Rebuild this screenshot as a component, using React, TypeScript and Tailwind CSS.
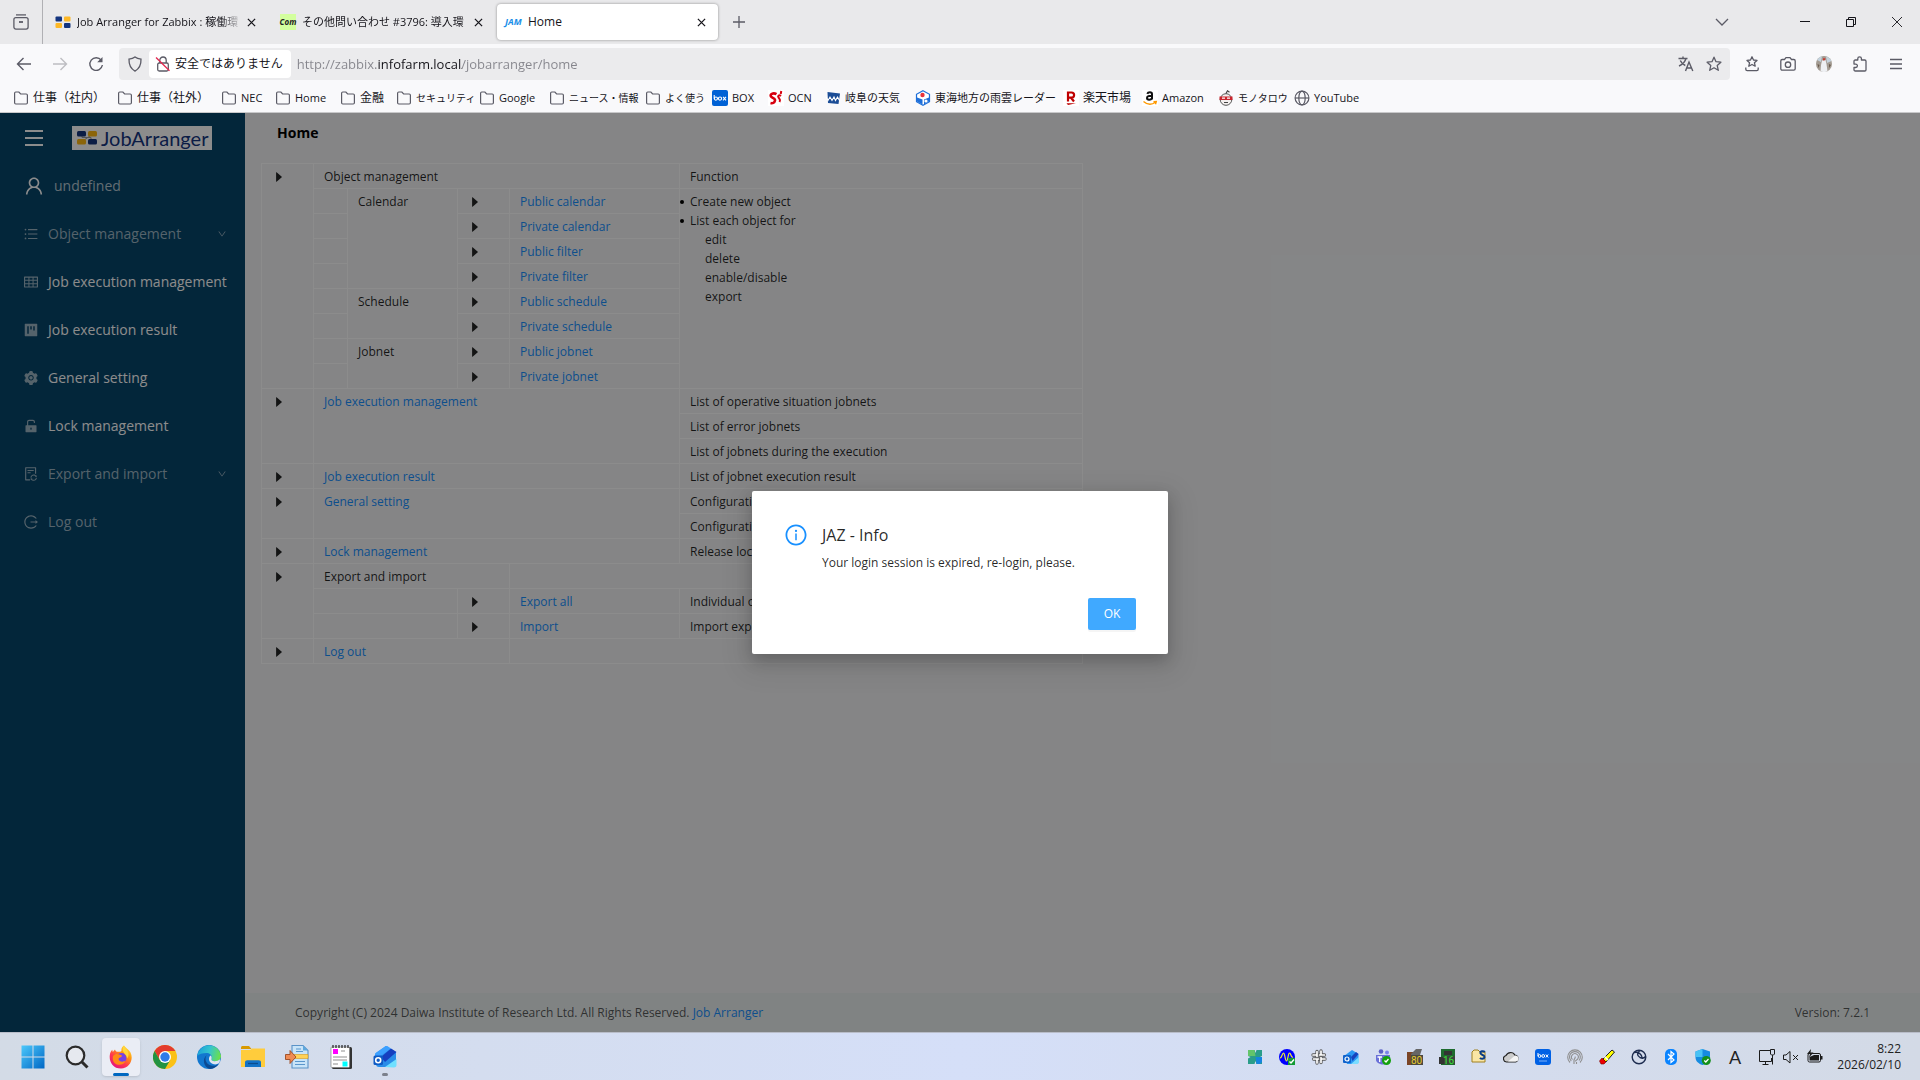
import React, { useState } from 'react';
import {
  AiFillCaretRight,
  AiFillProject,
  AiFillSetting,
  AiFillUnlock,
  AiOutlineDown,
  AiOutlineFileSync,
  AiOutlineInfoCircle,
  AiOutlineLogout,
  AiOutlineTable,
  AiOutlineUnorderedList,
  AiOutlineUser,
} from 'react-icons/ai';

const IconFolder = () => (
  <svg viewBox="0 0 16 16" className="h-4 w-4 shrink-0" fill="none" stroke="#5b5b66" strokeWidth="1.2">
    <path d="M1.6 3.2c0-.7.5-1.2 1.2-1.2h3.1l1.7 2h5.6c.7 0 1.2.5 1.2 1.2v7.6c0 .7-.5 1.2-1.2 1.2H2.8c-.7 0-1.2-.5-1.2-1.2z" />
  </svg>
);

const IconBox = () => (
  <svg viewBox="0 0 16 16" className="h-4 w-4 shrink-0">
    <rect width="16" height="16" rx="2" fill="#0061d5" />
    <g fill="none" stroke="#fff" strokeWidth="1.1">
      <path d="M2.2 5v3.500" />
      <circle cx="3.900" cy="8.600" r="1.600" />
      <circle cx="8" cy="8.600" r="1.600" />
      <path d="m11 6.900 3 3.400m0-3.400-3 3.400" />
    </g>
  </svg>
);

const IconOcn = () => (
  <svg viewBox="0 0 16 16" className="h-4 w-4 shrink-0">
    <rect width="16" height="16" fill="#fff" />
    <g fill="none" stroke="#d7000f" strokeWidth="2.6">
      <path d="M8.5 4.2C5 2.200 1.500 4.500 3 6.500s4.500 1.500 4 4-2.500 3-4.500 2.500" />
      <path d="M13 6c-2-1.500-3.500 0-2.500 1.500s2.500 2 1 4.500" strokeWidth="2" />
      <path d="m13.300 1-.6 3" strokeWidth="2" />
    </g>
  </svg>
);

const IconWeather = () => (
  <svg viewBox="0 0 16 16" className="h-4 w-4 shrink-0">
    <path d="M2.500 2 15 3.500 13.500 14 3 13z" fill="#1b4d96" />
    <path d="m1 7 2 3.500 2-3.500 2 3.500L9 7l1.500 3.500 2-3.500 2 3.500" fill="none" stroke="#fff" strokeWidth="1.100" />
  </svg>
);

const IconRadar = () => (
  <svg viewBox="0 0 16 16" className="h-4 w-4 shrink-0">
    <path d="M8 .8 14.500 4.300v7.400L8 15.200 1.500 11.700V4.300z" fill="#fff" stroke="#1e6fd9" strokeWidth="1.200" />
    <path d="M2 7.500 7.500 9.500v5L2 11.500zM14 7.500 9 9.500v5l5-3z" fill="#1e6fd9" />
    <circle cx="7.500" cy="5" r="2.200" fill="#e8333a" />
    <circle cx="11" cy="11" r="1.600" fill="#fff" />
  </svg>
);

const IconRakuten = () => (
  <svg viewBox="0 0 16 16" className="h-4 w-4 shrink-0">
    <rect width="16" height="16" fill="#fff" />
    <path d="M5 11.500v-9h3.500a2.600 2.600 0 0 1 0 5.200H5m3 0 3 3.800" fill="none" stroke="#bf0000" strokeWidth="2.200" />
    <path d="M3.500 13.200h9.500l-8 1.800z" fill="#bf0000" />
  </svg>
);

const IconAmazon = () => (
  <svg viewBox="0 0 16 16" className="h-4 w-4 shrink-0">
    <rect width="16" height="16" fill="#fff" />
    <path d="M5.300 3.800C6 1.800 10 1.600 10 4v5.400M10 5.800c-3-.2-5 .5-5 2.200 0 2.400 4 2.200 5 .2" fill="none" stroke="#111" strokeWidth="2" />
    <path d="M1.500 11.500c4 3.500 8.500 3.300 12 .8M11.500 11.800l2.800-.3-.8 2.700" fill="none" stroke="#f90" strokeWidth="1.400" />
  </svg>
);

const IconMonotaro = () => (
  <svg viewBox="0 0 16 16" className="h-4 w-4 shrink-0">
    <circle cx="8" cy="9.500" r="5.800" fill="#f4f0ef" stroke="#555" strokeWidth="1" />
    <path d="M1.500 6.500h13v3.500h-13z" fill="#c9242d" />
    <path d="M4 8.200h3M9 8.200h3" stroke="#fff" strokeWidth="1.300" />
    <path d="M6 12.500h4M8 3.500 9.500.8l2 1.400" fill="none" stroke="#444" strokeWidth="1.200" />
  </svg>
);

const IconGlobe = () => (
  <svg viewBox="0 0 16 16" className="h-4 w-4 shrink-0" fill="none" stroke="#5b5b66" strokeWidth="1.200">
    <circle cx="8" cy="8" r="6.900" />
    <ellipse cx="8" cy="8" rx="3.200" ry="6.900" />
    <path d="M1 8h14" />
  </svg>
);

const IconArranger = () => (
  <svg viewBox="0 0 20 15" className="h-4 w-5 shrink-0">
    <path d="M5 3v4h9v4M15 4 5 11" fill="none" stroke="#999" strokeWidth="1" />
    <rect x="0" y="0.500" width="9" height="5.500" rx="1.500" fill="#14357f" />
    <rect x="11" y="0.500" width="9" height="5.500" rx="1.500" fill="#fdb813" />
    <rect x="0" y="8.500" width="9" height="5.500" rx="1.500" fill="#fdb813" />
    <rect x="11" y="8.500" width="9" height="5.500" rx="1.500" fill="#14357f" />
  </svg>
);

const IconTabSquares = () => (
  <svg viewBox="0 0 16 16" className="h-4 w-4 shrink-0">
    <rect x="0.500" y="2.500" width="6.500" height="5" rx="1" fill="#14357f" />
    <rect x="9" y="2.500" width="6.500" height="5" rx="1" fill="#fdb827" />
    <rect x="0.500" y="9" width="6.500" height="5" rx="1" fill="#fdb827" />
    <rect x="9" y="9" width="6.500" height="5" rx="1" fill="#14357f" />
  </svg>
);

const IconClose = () => (
  <svg viewBox="0 0 10 10" className="h-[9px] w-[9px]" stroke="#15141a" strokeWidth="1.400">
    <path d="m1 1 8 8M9 1 1 9" />
  </svg>
);

interface Bookmark {
  label: string;
  icon: React.ReactNode;
  width: string;
  size: string;
}

const bookmarks: Bookmark[] = [
  { label: '仕事（社内）', icon: <IconFolder />, width: 'w-[104px]', size: 'text-xs' },
  { label: '仕事（社外）', icon: <IconFolder />, width: 'w-[104px]', size: 'text-xs' },
  { label: 'NEC', icon: <IconFolder />, width: 'w-[54px]', size: 'text-[11px]' },
  { label: 'Home', icon: <IconFolder />, width: 'w-[65px]', size: 'text-[11px]' },
  { label: '金融', icon: <IconFolder />, width: 'w-[56px]', size: 'text-xs' },
  { label: 'セキュリティ', icon: <IconFolder />, width: 'w-[83px]', size: 'text-[10px]' },
  { label: 'Google', icon: <IconFolder />, width: 'w-[70px]', size: 'text-[11px]' },
  { label: 'ニュース・情報', icon: <IconFolder />, width: 'w-[96px]', size: 'text-[10px]' },
  { label: 'よく使う', icon: <IconFolder />, width: 'w-[67px]', size: 'text-[10px]' },
  { label: 'BOX', icon: <IconBox />, width: 'w-[56px]', size: 'text-[11px]' },
  { label: 'OCN', icon: <IconOcn />, width: 'w-[57px]', size: 'text-[11px]' },
  { label: '岐阜の天気', icon: <IconWeather />, width: 'w-[90px]', size: 'text-[11px]' },
  { label: '東海地方の雨雲レーダー', icon: <IconRadar />, width: 'w-[148px]', size: 'text-[11px]' },
  { label: '楽天市場', icon: <IconRakuten />, width: 'w-[79px]', size: 'text-xs' },
  { label: 'Amazon', icon: <IconAmazon />, width: 'w-[76px]', size: 'text-[11px]' },
  { label: 'モノタロウ', icon: <IconMonotaro />, width: 'w-[76px]', size: 'text-[10px]' },
  { label: 'YouTube', icon: <IconGlobe />, width: 'w-[66px]', size: 'text-[11px]' },
];

const TabBar: React.FC = () => (
  <div className="flex h-11 items-center bg-[#e9e9eb]">
    <button type="button" aria-label="Tab overview" className="flex h-11 w-[42px] items-center justify-center">
      <svg viewBox="0 0 16 16" className="h-4 w-4" fill="none" stroke="#5b5b66" strokeWidth="1.300">
        <path d="M3 .9h10" />
        <rect x="0.900" y="3.600" width="14.200" height="11.500" rx="2" />
        <path d="M6 8h4" strokeWidth="1.800" />
      </svg>
    </button>
    <div className="h-11 w-px bg-[#b0b0b4]" />
    <div className="flex w-[225px] items-center pl-3">
      <IconTabSquares />
      <span className="ml-1.5 flex-1 whitespace-nowrap text-[11px] [mask-image:linear-gradient(to_right,black_86%,transparent)]">
        Job Arranger for Zabbix : 稼働環
      </span>
      <button type="button" aria-label="Close tab" className="mr-3 ml-1"><IconClose /></button>
    </div>
    <div className="flex w-[229px] items-center pl-3">
      <span className="flex h-4 w-4 shrink-0 items-center justify-center bg-[#d3ff9e] text-[8px] font-bold italic text-[#222]">Com</span>
      <span className="ml-1.5 flex-1 whitespace-nowrap text-[11px] [mask-image:linear-gradient(to_right,black_92%,transparent)]">
        その他問い合わせ #3796: 導入環
      </span>
      <button type="button" aria-label="Close tab" className="mr-3.5"><IconClose /></button>
    </div>
    <div className="flex h-9 w-[221px] items-center rounded bg-white pl-2 shadow-[0_0_3px_rgba(0,0,0,0.4)]">
      <span className="w-[17px] text-[9px] font-bold italic text-[#1a8fe8]">JAM</span>
      <span className="ml-1.5 flex-1 text-xs">Home</span>
      <button type="button" aria-label="Close tab" className="mr-3"><IconClose /></button>
    </div>
    <button type="button" aria-label="New tab" className="ml-3.5">
      <svg viewBox="0 0 14 14" className="h-3.5 w-3.5" stroke="#5b5b66" strokeWidth="1.300"><path d="M7 1v12M1 7h12" /></svg>
    </button>
    <div className="flex-1" />
    <button type="button" aria-label="List all tabs" className="mr-[71px]">
      <svg viewBox="0 0 14 14" className="h-3.5 w-3.5" fill="none" stroke="#5b5b66" strokeWidth="1.300"><path d="m1 4 6 6 6-6" /></svg>
    </button>
    <button type="button" aria-label="Minimize" className="mr-9">
      <svg viewBox="0 0 10 10" className="h-2.5 w-2.5" stroke="#15141a"><path d="M0 4.500h10" /></svg>
    </button>
    <button type="button" aria-label="Restore" className="mr-9">
      <svg viewBox="0 0 10 10" className="h-2.5 w-2.5" fill="none" stroke="#15141a"><path d="M.5 2.500h7v7h-7zM2.500 2.500v-2h7v7h-2" /></svg>
    </button>
    <button type="button" aria-label="Close window" className="mr-[18px]">
      <svg viewBox="0 0 10 10" className="h-2.5 w-2.5" stroke="#15141a" strokeWidth="0.900"><path d="m0 0 10 10M10 0 0 10" /></svg>
    </button>
  </div>
);

const starPath = 'm8 1.200 2 4.500 4.900.5-3.700 3.200 1.100 4.900L8 11.800l-4.300 2.500 1.100-4.900L1.100 6.200 6 5.700z';

const ToolBar: React.FC = () => (
  <div className="flex h-10 items-center text-[#5b5b66]">
    <div className="flex w-[119px] items-center gap-5 pl-4">
      <button type="button" aria-label="Back">
        <svg viewBox="0 0 16 16" className="h-4 w-4" fill="none" stroke="currentColor" strokeWidth="1.400"><path d="M15 8H1.500M7.500 2l-6 6 6 6" /></svg>
      </button>
      <button type="button" aria-label="Forward" className="text-[#bdbdc2]">
        <svg viewBox="0 0 16 16" className="h-4 w-4" fill="none" stroke="currentColor" strokeWidth="1.400"><path d="M1 8h13.500M8.500 2l6 6-6 6" /></svg>
      </button>
      <button type="button" aria-label="Reload">
        <svg viewBox="0 0 16 16" className="h-4 w-4" fill="none" stroke="currentColor" strokeWidth="1.400">
          <path d="M13.200 4.200A6.300 6.300 0 1 0 14.400 9" />
          <path d="M14.500 1v5.300H9.200z" fill="currentColor" stroke="none" />
        </svg>
      </button>
    </div>
    <div className="flex h-8 flex-1 items-center rounded bg-[#ebebed] pl-2">
      <svg viewBox="0 0 16 16" className="h-4 w-4" fill="none" stroke="currentColor" strokeWidth="1.300">
        <path d="M8 .9c1.900 1.500 4 2 6 2.200.2 5.500-1.300 9.500-6 12-4.700-2.500-6.200-6.500-6-12 2-.2 4.100-.7 6-2.200z" />
      </svg>
      <button type="button" className="ml-1.5 flex h-7 items-center gap-1 rounded bg-white pr-2 pl-1.5 text-xs whitespace-nowrap text-[#15141a]">
        <svg viewBox="0 0 16 16" className="h-4 w-4" fill="none" stroke="#5b5b66" strokeWidth="1.300">
          <rect x="2.700" y="7" width="10.600" height="8" rx="1.500" />
          <path d="M4.800 7V4.200a3.200 3.200 0 0 1 6.400 0V7" />
          <path d="m1 1.500 13.500 13.300" stroke="#e22850" />
        </svg>
        安全ではありません
      </button>
      <input
        aria-label="Address"
        defaultValue="http://zabbix.infofarm.local/jobarranger/home"
        className="ml-1.5 h-7 flex-1 bg-[linear-gradient(to_right,#85858c_80px,#15141a_80px,#15141a_165px,#85858c_165px)] bg-clip-text text-[13px] text-transparent outline-none"
      />
      <button type="button" aria-label="Translate" className="mr-3">
        <svg viewBox="0 0 16 16" className="h-4 w-4" fill="none" stroke="currentColor" strokeWidth="1.400">
          <path d="M.5 2.500h9M5 .5v2M8 2.500C7 6 4.500 8.500 1 10M2.300 4.500c1 2.500 2.700 4 5 5" />
          <path d="m7.500 15 3.500-9 3.800 9M8.800 12h4.800" />
        </svg>
      </button>
      <button type="button" aria-label="Bookmark this page" className="mr-2">
        <svg viewBox="0 0 16 16" className="h-4 w-4" fill="none" stroke="currentColor" strokeWidth="1.300" strokeLinejoin="round"><path d={starPath} /></svg>
      </button>
    </div>
    <div className="flex items-center gap-5 pr-4 pl-3.5">
      <button type="button" aria-label="Bookmarks">
        <svg viewBox="0 0 16 16" className="h-4 w-4" fill="none" stroke="currentColor" strokeWidth="1.300" strokeLinejoin="round">
          <path d="m8 .8 1.500 3.200 3.500.4-2.600 2.300.8 3.500L8 8.500l-3.200 1.700.8-3.500L3 4.400 6.500 4z" />
          <path d="M1.800 11.500v1.700c0 .8.600 1.400 1.400 1.400h9.600c.8 0 1.400-.6 1.400-1.400v-1.700" />
        </svg>
      </button>
      <button type="button" aria-label="Screenshot">
        <svg viewBox="0 0 16 16" className="h-4 w-4" fill="none" stroke="currentColor" strokeWidth="1.300">
          <path d="M2.200 3.500h2.300L6 1.700h4l1.500 1.800h2.300c.8 0 1.400.6 1.400 1.400v7.900c0 .8-.6 1.400-1.400 1.400H2.200c-.8 0-1.400-.6-1.400-1.400V4.900c0-.8.6-1.400 1.400-1.400z" />
          <circle cx="8" cy="8.700" r="2.700" />
        </svg>
      </button>
      <button type="button" aria-label="Account">
        <svg viewBox="0 0 16 16" className="h-4 w-4">
          <circle cx="8" cy="8" r="8" fill="#a39b92" />
          <path d="M1 4a8 8 0 0 1 5-3.800L5 6zM10 .4A8 8 0 0 1 15.500 5L11 7z" fill="#c3d2dd" />
          <path d="M6 4.500 9.500 4l1 4 1 7.200a8 8 0 0 1-7 0L5 9z" fill="#eef0f3" />
          <path d="M7 2.300h2.500l-.5 2-2 .2z" fill="#c93a30" />
          <path d="m1.500 8 2 1-1 3zM13 8l2 1-2 3z" fill="#6a5a4c" />
        </svg>
      </button>
      <button type="button" aria-label="Extensions">
        <svg viewBox="0 0 16 16" className="h-4 w-4" fill="none" stroke="currentColor" strokeWidth="1.300" strokeLinejoin="round">
          <path d="M2 5.200c0-.7.500-1.200 1.200-1.200h2.600V2.600a1.800 1.800 0 0 1 3.600 0V4h3.400c.7 0 1.200.5 1.200 1.200v8.600c0 .7-.5 1.200-1.200 1.200H3.200c-.7 0-1.200-.5-1.200-1.200v-2.300h1.700a1.700 1.700 0 0 0 0-3.400H2z" />
        </svg>
      </button>
      <button type="button" aria-label="Menu">
        <svg viewBox="0 0 16 16" className="h-4 w-4" stroke="currentColor" strokeWidth="1.300"><path d="M2 3.500h12M2 8h12M2 12.500h12" /></svg>
      </button>
    </div>
  </div>
);

const BookmarkBar: React.FC = () => (
  <nav aria-label="Bookmarks" className="flex h-[29px] items-center border-b border-[#c8c8ca] pl-[13px]">
    {bookmarks.map((item) => (
      <a key={item.label} href="#" className={`flex shrink-0 items-center gap-1 whitespace-nowrap ${item.width} ${item.size}`}>
        {item.icon}
        {item.label}
      </a>
    ))}
  </nav>
);

const menuItems = [
  { label: 'Object management', Icon: AiOutlineUnorderedList, group: true, muted: true },
  { label: 'Job execution management', Icon: AiOutlineTable, group: false, muted: false },
  { label: 'Job execution result', Icon: AiFillProject, group: false, muted: false },
  { label: 'General setting', Icon: AiFillSetting, group: false, muted: false },
  { label: 'Lock management', Icon: AiFillUnlock, group: false, muted: false },
  { label: 'Export and import', Icon: AiOutlineFileSync, group: true, muted: true },
  { label: 'Log out', Icon: AiOutlineLogout, group: false, muted: true },
];

const Sidebar: React.FC = () => (
  <aside className="w-[245px] shrink-0 bg-[#07456a] text-sm">
    <div className="flex h-[49px] items-center pl-[25px]">
      <button type="button" aria-label="Toggle menu" className="flex w-[18px] flex-col gap-[5px]">
        <span className="h-0.5 bg-white" />
        <span className="h-0.5 bg-white" />
        <span className="h-0.5 bg-white" />
      </button>
      <div className="ml-[29px] flex h-6 w-[140px] items-center gap-1 bg-white pl-[5px]">
        <IconArranger />
        <span className="font-['Lato',sans-serif] text-[20px] leading-6 text-[#14357f]">JobArranger</span>
      </div>
    </div>
    <div className="flex h-12 items-center pl-[23px] text-[#b5c7d2]">
      <AiOutlineUser className="h-[22px] w-[22px] text-white" />
      <span className="ml-[9px]">undefined</span>
    </div>
    <nav>
      {menuItems.map(({ label, Icon, group, muted }) => (
        <a key={label} href="#" className={`flex h-12 items-center pl-[23px] whitespace-nowrap ${muted ? 'text-[#9cb5c3]' : 'text-white'}`}>
          <Icon className="h-4 w-4 text-[#9cb5c3]" />
          <span className="ml-[9px] flex-1">{label}</span>
          {group && <AiOutlineDown className="mr-[18px] h-2.5 w-2.5" />}
        </a>
      ))}
    </nav>
  </aside>
);

const cell = 'h-[25px] border border-white px-2.5 pt-[3px] pb-[2px] align-top';

const Arrow = ({ rows = 1 }: { rows?: number }) => (
  <td rowSpan={rows} className={cell}>
    <AiFillCaretRight className="mt-[3px] h-3.5 w-3.5" />
  </td>
);

const LinkCell = ({ label, cols = 1, rows = 1 }: { label: string; cols?: number; rows?: number }) => (
  <td colSpan={cols} rowSpan={rows} className={cell}>
    <a href="#" className="text-[#1890ff]">{label}</a>
  </td>
);

const objectRows = [
  { group: 'Calendar', rows: 4, label: 'Public calendar' },
  { label: 'Private calendar' },
  { label: 'Public filter' },
  { label: 'Private filter' },
  { group: 'Schedule', rows: 2, label: 'Public schedule' },
  { label: 'Private schedule' },
  { group: 'Jobnet', rows: 2, label: 'Public jobnet' },
  { label: 'Private jobnet' },
];

const FunctionTable: React.FC = () => (
  <table className="ml-4 w-[822px] table-fixed border-collapse text-xs leading-[19px] text-black/85">
    <colgroup>
      <col className="w-[52px]" />
      <col className="w-[34px]" />
      <col className="w-[110px]" />
      <col className="w-[52px]" />
      <col className="w-[170px]" />
      <col />
    </colgroup>
    <tbody>
      <tr>
        <Arrow rows={9} />
        <td colSpan={4} className={cell}>Object management</td>
        <td className={cell}>Function</td>
      </tr>
      {objectRows.map((row, index) => (
        <tr key={row.label}>
          <td className={cell} />
          {row.group && <td rowSpan={row.rows} className={cell}>{row.group}</td>}
          <Arrow />
          <LinkCell label={row.label} />
          {index === 0 && (
            <td rowSpan={8} className={cell}>
              <ul>
                {['Create new object', 'List each object for'].map((text) => (
                  <li key={text} className="relative">
                    <span className="absolute top-2 -left-2.5 h-1 w-1 rounded-full bg-black" />
                    {text}
                  </li>
                ))}
              </ul>
              <ul className="pl-[15px]">
                <li>edit</li>
                <li>delete</li>
                <li>enable/disable</li>
                <li>export</li>
              </ul>
            </td>
          )}
        </tr>
      ))}
      <tr>
        <Arrow rows={3} />
        <LinkCell label="Job execution management" cols={4} rows={3} />
        <td className={cell}>List of operative situation jobnets</td>
      </tr>
      <tr><td className={cell}>List of error jobnets</td></tr>
      <tr><td className={cell}>List of jobnets during the execution</td></tr>
      <tr>
        <Arrow />
        <LinkCell label="Job execution result" cols={4} />
        <td className={cell}>List of jobnet execution result</td>
      </tr>
      <tr>
        <Arrow rows={2} />
        <LinkCell label="General setting" cols={4} rows={2} />
        <td className={cell}>Configuration</td>
      </tr>
      <tr><td className={cell}>Configuration</td></tr>
      <tr>
        <Arrow />
        <LinkCell label="Lock management" cols={4} />
        <td className={cell}>Release lock</td>
      </tr>
      <tr>
        <Arrow rows={3} />
        <td colSpan={3} className={cell}>Export and import</td>
        <td colSpan={2} className={cell} />
      </tr>
      <tr>
        <td colSpan={2} className={cell} />
        <Arrow />
        <LinkCell label="Export all" />
        <td className={cell}>Individual o</td>
      </tr>
      <tr>
        <td colSpan={2} className={cell} />
        <Arrow />
        <LinkCell label="Import" />
        <td className={cell}>Import expo</td>
      </tr>
      <tr>
        <Arrow />
        <LinkCell label="Log out" cols={3} />
        <td colSpan={2} className={cell} />
      </tr>
    </tbody>
  </table>
);

const InfoDialog = ({ onClose }: { onClose: () => void }) => (
  <div className="absolute inset-0 flex items-center justify-center bg-black/45">
    <div
      role="dialog"
      aria-labelledby="dialog-title"
      className="w-[416px] rounded-xs bg-white px-8 pt-8 pb-6 shadow-[0_6px_16px_rgba(0,0,0,0.2),0_9px_28px_8px_rgba(0,0,0,0.08)]"
    >
      <div className="flex gap-3.5">
        <AiOutlineInfoCircle className="h-6 w-6 text-[#1890ff]" />
        <div className="text-black/85">
          <h2 id="dialog-title" className="text-base leading-6">JAZ - Info</h2>
          <p className="mt-1.5 text-xs leading-[19px]">Your login session is expired, re-login, please.</p>
        </div>
      </div>
      <div className="mt-[26px] flex justify-end">
        <button type="button" onClick={onClose} className="h-8 w-12 rounded-xs bg-[#40a9ff] text-xs text-white shadow-[0_2px_0_rgba(0,0,0,0.04)]">
          OK
        </button>
      </div>
    </div>
  </div>
);

const launchers = [
  {
    label: 'Start',
    art: (
      <>
        <defs>
          <linearGradient id="win" x1="0" y1="0" x2="1" y2="1"><stop stopColor="#4cc8fb" /><stop offset="1" stopColor="#0067c5" /></linearGradient>
        </defs>
        <path d="M.5.500h11v11H.500zM12.500.500h11v11h-11zM.5 12.500h11v11H.500zM12.500 12.500h11v11h-11z" fill="url(#win)" />
      </>
    ),
  },
  {
    label: 'Search',
    art: (
      <g fill="none" stroke="#2b2b2b">
        <circle cx="10.500" cy="10.500" r="8.800" strokeWidth="2.200" fill="#e6e9ef" />
        <path d="m17 17 5.500 5.500" strokeWidth="3" />
      </g>
    ),
  },
  {
    label: 'Firefox',
    active: true,
    art: (
      <>
        <defs>
          <linearGradient id="fox" x1="1" y1="0" x2="0.300" y2="1"><stop stopColor="#fff44f" /><stop offset=".4" stopColor="#ff980e" /><stop offset=".7" stopColor="#ff3750" /><stop offset="1" stopColor="#e5157a" /></linearGradient>
        </defs>
        <path d="M15 .5c1 2 5 4 6.500 7 3.500 7-1 16-9.500 16S-.5 16 1 9c.3-1.800 1.200-3.200 2.200-4.300L3.800 7 6 4.500c.3 1.300 1 2 2 2.300 2 .2 3.500 0 4.500-.8C12 3.500 13.500 1.500 15 .5z" fill="url(#fox)" />
        <circle cx="12.500" cy="13" r="5" fill="#7542e5" />
        <path d="M4 11c2-2.500 4.500-2.500 6.500-1.500 2 .5 2.500 1 2.500 1.800-1 1.200-3 1-3.500 2.700.5 3 5 3.500 7 1.500-1 5-8 5.500-11 2.500-1.700-2-2-4.500-1.500-7z" fill="#ff8a16" />
        <path d="M15 .5c1 3 4 4 4.500 8 .3 2-.5 4-1.500 5 0-3-2-4-3.500-6.500C13 5 13.500 2.500 15 .5z" fill="#ffd83b" />
      </>
    ),
  },
  {
    label: 'Chrome',
    art: (
      <>
        <circle cx="12" cy="12" r="12" fill="#fbc116" />
        <path d="M12 6h10.400A12 12 0 0 0 1.600 6l5.200 9z" fill="#e33b2e" />
        <path d="M1.600 6A12 12 0 0 0 12 24l5.200-9H6.800z" fill="#229342" />
        <circle cx="12" cy="12" r="6" fill="#fff" />
        <circle cx="12" cy="12" r="4.700" fill="#2f7be8" />
      </>
    ),
  },
  {
    label: 'Edge',
    art: (
      <>
        <defs>
          <linearGradient id="edge" x1="0" y1="0.300" x2="1" y2="0.500"><stop stopColor="#1aa0d8" /><stop offset=".5" stopColor="#35c4cf" /><stop offset="1" stopColor="#6be04a" /></linearGradient>
        </defs>
        <circle cx="12" cy="12" r="12" fill="#1277cf" />
        <path d="M.2 11A12 12 0 0 1 24 10.500c.2 4-3 6-6.500 5.700-2.500-.2-3.500-1.200-3-2.200 1.500-3-1.500-6-5-6C5.500 8 2 9 .2 11z" fill="url(#edge)" />
        <path d="M10 10c-3 3-1.500 9 4 10.500 3 .8 6 0 8-2A12 12 0 0 1 13 24C6 22 5 13 10 10z" fill="#0c4a92" />
        <path d="M14.500 14c-.5 1.300 1 2.200 3 2.200 2.300 0 4.200-.7 5.300-2 .3 1.600 0 3-.8 4.100-4 2.500-9.500.5-10-4-.1-2 .7-3.500 1.700-3.800 1 .9 1.200 2.200.8 3.500z" fill="#dfe6ef" />
      </>
    ),
  },
  {
    label: 'Explorer',
    art: (
      <>
        <path d="M0 2.500C0 1.700.7 1 1.500 1H8l2.500 3H0z" fill="#d99a00" />
        <path d="M0 5h9l2-1.500h13V22H0z" fill="#ffcc3c" />
        <path d="M4 22v-4.500c0-1.400 1-2.300 2.300-2.300h11.400c1.300 0 2.300.9 2.300 2.300V22z" fill="#1273c8" />
        <path d="M7 18.500h10" stroke="#0a4d8e" strokeWidth="1.300" />
      </>
    ),
  },
  {
    label: 'Import tool',
    art: (
      <>
        <path d="M7 .5h11l5 5V23H7z" fill="#c9e4f8" stroke="#5b93c8" strokeWidth="1.100" />
        <path d="M18 .5v5h5z" fill="#5fa8dd" />
        <path d="M10 16.500h10M10 19.500h10M11 4h5M11 6.500h7" stroke="#5a96cc" strokeWidth="1.200" />
        <path d="M8 9.500h15v4H8z" fill="#ffd257" stroke="#d69a1c" strokeWidth=".6" />
        <path d="M.5 9.500h4.500v-4l6 6.500-6 6.500v-4H.500z" fill="#ef8b54" stroke="#9c4a20" strokeWidth=".9" />
      </>
    ),
  },
  {
    label: 'Notepad',
    art: (
      <>
        <rect x="3" y="2" width="20" height="22" rx="1.500" fill="#333" />
        <rect x="2" y="2" width="18.500" height="20.500" rx="1" fill="#fff" stroke="#777" strokeWidth=".6" />
        <path d="M4 0v3M7 0v3M10 0v3M13 0v3M16 0v3M19 0v3" stroke="#222" strokeWidth="1.200" />
        <path d="M4 4h5v5H4z" fill="#f0f" />
        <path d="M13.500 16.500h5v5h-5z" fill="#0ff" />
        <path d="M4 12h14M4 15h14M4 19h5M12 6h4" stroke="#b5b5b5" strokeWidth="1.500" />
      </>
    ),
  },
  {
    label: 'Outlook',
    running: true,
    art: (
      <>
        <path d="M3 8 13 1l10 6v12c0 2-1 3-3 3H6c-2 0-3-1-3-3z" fill="#2a8de8" />
        <path d="M2 8.500 12 1.500c1-.6 2-.6 3 0l3 2L5 13H2z" fill="#3ca0ff" />
        <path d="m8 12 10-8.500 5.500 3.500L12 17z" fill="#163fc0" />
        <path d="m12 22 11.500-8V20c0 1.500-1 2.500-2.500 2.500z" fill="#6fe0ff" />
        <rect x="0.500" y="10.500" width="9.500" height="9.500" rx="1.500" fill="#0f5bc4" />
        <circle cx="5.200" cy="15.200" r="2.500" fill="none" stroke="#fff" strokeWidth="1.600" />
      </>
    ),
  },
] as { label: string; active?: boolean; running?: boolean; art: React.ReactNode }[];

const trayIcons = [
  {
    label: 'Clover',
    art: <><path d="M1 1h6.500l1 3 1-3H15v6l-2 1 2 1v6H9.500l-1-3-1 3H1V9.500L3.500 8 1 7z" fill="#2a9d8a" /><path d="M1 1h6.500l1 6H1z" fill="#63c46b" /><path d="M8.500 8H15v5l-2 2H9.500z" fill="#1584e0" /></>,
  },
  {
    label: 'Monitor',
    art: <><circle cx="8" cy="8" r="8" fill="#00f" /><path d="M1 9c2 0 2-5 3.500-5S6 12 7.500 12 9 4 10.500 4 12 9 14 8" fill="none" stroke="#ee3" strokeWidth="1.200" /><path d="M9 9h7v7H9z" fill="#139a34" /><path d="m10.500 12.500 1.500 1.500 3-3.500" fill="none" stroke="#fff" strokeWidth="1.400" /></>,
  },
  {
    label: 'Slack',
    art: <g fill="none" strokeLinecap="round"><path d="M6 2.500v5M10 8.500v5M8.500 6h5M2.500 10h5M10 2v4M6 10v4M2 6h4M10 10h4" stroke="#555" strokeWidth="3.300" /><path d="M6 2.500v5M10 8.500v5M8.500 6h5M2.500 10h5M10 2v4M6 10v4M2 6h4M10 10h4" stroke="#fff" strokeWidth="1.700" /></g>,
  },
  {
    label: 'Outlook',
    art: <><path d="M1 7 9 1l6.500 4v7c0 1.600-1 3-3 3H4z" fill="#2b98f3" /><path d="m8 8 5-5 2.500 2-6 7z" fill="#1644bd" /><path d="m8 15 8-7v5c0 1-1 2-2 2z" fill="#7bdcff" /><rect y="6" width="8" height="8" rx="1" fill="#0f62cc" /><circle cx="4" cy="10" r="2" fill="none" stroke="#fff" strokeWidth="1.200" /></>,
  },
  {
    label: 'Teams',
    art: <><circle cx="6" cy="2.500" r="2.300" fill="#5b5fc7" /><circle cx="12" cy="3.500" r="2" fill="#7b83eb" /><path d="M1 6h14v5c0 3-3 4.500-7 4.500S1 13 1 11z" fill="#6a70d8" /><path d="M2.500 8h4.500M4.700 8v5" stroke="#fff" strokeWidth="1.300" /><circle cx="11.500" cy="11.500" r="4.500" fill="#13a10e" /><path d="m9.500 11.500 1.500 1.500 2.500-3" fill="none" stroke="#fff" strokeWidth="1.300" /></>,
  },
  {
    label: 'Temperature',
    value: '80',
    color: 'fill-[#e8c92e]',
    art: <><path d="M0 3h6v13H0z" fill="#7b4526" /><path d="m4 5 5-5h6l-2 6H4z" fill="#666" /><path d="M4 6h12v10H4z" fill="#4b4a3f" /></>,
  },
  {
    label: 'Memory',
    value: '16',
    color: 'fill-[#35e335]',
    art: <><path d="M2 0h14v16H2z" fill="#1d6b2e" /><path d="M0 8h5v7H0zM5 2h8v4H5z" fill="#333" /><path d="M5 7h11v8H5z" fill="#3b443b" /></>,
  },
  {
    label: 'Sync folder',
    art: <><path d="M1 3 3 1h4l2 2h5v10H1z" fill="#fae6a4" stroke="#a08020" /><path d="M14 3c-2-1.500-5-.8-4.500 1.200S14 6 13.500 8.200 10 10 9 8.800" fill="none" stroke="#0b3d86" strokeWidth="2" /></>,
  },
  {
    label: 'OneDrive',
    art: <><path d="M3.500 13A3.300 3.300 0 0 1 3 6.500 5 5 0 0 1 12 6.200 3.500 3.500 0 0 1 12.500 13z" fill="#ccc" stroke="#222" strokeWidth="1.200" /><path d="m5 12.500 7-6a3 3 0 0 1 1 6z" fill="#f4f4f4" /></>,
  },
  {
    label: 'Box',
    art: <><rect width="16" height="16" rx="3" fill="#0061e5" /><g fill="none" stroke="#fff"><path d="M3 4v3" /><circle cx="4.500" cy="7" r="1.400" /><circle cx="8.200" cy="7" r="1.400" /><path d="m10.800 5.500 2.400 3m0-3-2.400 3" /></g><path d="M4 12h8" stroke="#69a5f5" strokeWidth="1.200" /></>,
  },
  {
    label: 'Fingerprint',
    art: <g fill="none" stroke="#8f8f8f" strokeWidth="1.100"><path d="M3 13.500A7.300 7.300 0 1 1 13 13.500" /><path d="M4.300 12A5.400 5.400 0 1 1 12 11.500" /><path d="M5.500 10.500a3.400 3.400 0 1 1 5.200-.5c-.8 1.300-2 1-2.300 2.500M8 7.500c1 1.500-1 2.500-1 3.500v4M9.500 15v-2" /></g>,
  },
  {
    label: 'Marker',
    art: <><path d="M4 10 13 1l2.500 2L7 13z" fill="#ff0" stroke="#222" /><path d="m3 9 4 4-2 2H2l-1.500-3z" fill="#e00" stroke="#700" strokeWidth=".6" /><path d="m5.500 7.500 3.500 3.500" stroke="#fff" strokeWidth="1.500" /></>,
  },
  {
    label: 'Browser agent',
    art: <g fill="none" stroke="#1e2d50" strokeWidth="1.400"><circle cx="8" cy="8" r="6.800" /><path d="M3 3.500c4-1 8 1 8.500 6.500M9 1.500c-3 2-3.500 5 0 7 2 .8 4.500.5 5.500-1" /></g>,
  },
  {
    label: 'Bluetooth',
    art: <><rect x="2" width="12" height="16" rx="5" fill="#0a84ff" /><path d="m5 5 6 6-3 2.500v-11L11 5l-6 6" fill="none" stroke="#fff" strokeWidth="1.200" /></>,
  },
  {
    label: 'Security',
    art: <><path d="M7.500 0 15 2.500V8c0 4-3 6.500-7.500 8C3 14.500.5 12 .5 8V2.500z" fill="#168be0" /><path d="M7.500 0v8H.5V2.500z" fill="#47c2f4" /><circle cx="11.300" cy="11.500" r="4.500" fill="#13901a" /><path d="m9.300 11.500 1.500 1.500 2.700-3" fill="none" stroke="#fff" strokeWidth="1.300" /></>,
  },
] as { label: string; value?: string; color?: string; art: React.ReactNode }[];

const TaskBar: React.FC = () => (
  <footer className="flex h-12 items-center border-t border-[#b9bdc9] bg-linear-to-r from-[#d3dbe6] via-[#d5dff8] to-[#d3dae6] pl-3.5 text-[#222]">
    <div className="flex gap-1.5">
      {launchers.map((app) => (
        <button
          key={app.label}
          type="button"
          aria-label={app.label}
          className={`relative flex h-[38px] w-[38px] items-center justify-center rounded ${app.active ? 'bg-[#eaedf5] shadow-sm' : ''}`}
        >
          <svg viewBox="0 0 24 24" className="h-6 w-6">{app.art}</svg>
          {app.active && <span className="absolute bottom-0 h-[3px] w-4 rounded-full bg-[#0067c0]" />}
          {app.running && <span className="absolute bottom-0 h-[3px] w-1.5 rounded-full bg-[#7c818c]" />}
        </button>
      ))}
    </div>
    <div className="flex-1" />
    <div className="flex items-center">
      {trayIcons.map((item) => (
        <button key={item.label} type="button" aria-label={item.label} className="flex h-8 w-8 items-center justify-center">
          <svg viewBox="0 0 16 16" className="h-4 w-4">
            {item.art}
            {item.value && <text x="4" y="15" className={`font-['Roboto',sans-serif] text-[10px] ${item.color}`}>{item.value}</text>}
          </svg>
        </button>
      ))}
      <button type="button" className="w-8 font-['Lato',sans-serif] text-lg leading-8">A</button>
      <button type="button" aria-label="Network" className="flex w-8 justify-center">
        <svg viewBox="0 0 16 16" className="h-4 w-4" fill="none" stroke="#1b1b1b"><path d="M11 1.500H.500v11h12V9M6.500 12.500v3M3.500 15.500h6M11.500.500h4V5l-1 1h-2l-1-1zM13.500 6v9.500" /></svg>
      </button>
      <button type="button" aria-label="Volume muted" className="flex w-6 justify-start">
        <svg viewBox="0 0 16 16" className="h-4 w-4" fill="none" stroke="#1b1b1b"><path d="M.5 6v4.500h2.500L7 14V2.500L3 6zM10 6l5 5M15 6l-5 5" /></svg>
      </button>
      <button type="button" aria-label="Battery" className="flex w-6 justify-start">
        <svg viewBox="0 0 16 16" className="h-4 w-4"><rect x="1" y="4.500" width="12.500" height="8.500" rx="1.500" fill="none" stroke="#1b1b1b" /><path d="M2.500 8 7 6h5v5.500H2.500zM14 7h1.500v3.500H14zM4 0 0 5h3L2 8.500 6.500 3.500h-3z" fill="#1b1b1b" /></svg>
      </button>
    </div>
    <div className="flex w-[89px] flex-col items-end pr-[19px] text-xs leading-4 whitespace-nowrap">
      <span>8:22</span>
      <span>2026/02/10</span>
    </div>
  </footer>
);

const App: React.FC = () => {
  const [expired, setExpired] = useState<boolean>(true);

  return (
    <div className="flex min-h-screen flex-col font-['Open_Sans','Noto_Sans_CJK_JP',sans-serif] text-[#15141a]">
      <header className="bg-[#f9f9fb]">
        <TabBar />
        <ToolBar />
        <BookmarkBar />
      </header>

      <div className="relative flex flex-1">
        <Sidebar />
        <main className="flex flex-1 flex-col bg-[#f2f3f5]">
          <h1 className="h-[50px] pt-2.5 pl-8 text-sm font-bold text-black">Home</h1>
          <FunctionTable />
          <div className="flex-1" />
          <div className="flex h-[39px] items-center justify-between bg-[#e9eeee] px-[50px] text-xs text-black/65">
            <p>
              Copyright (C) 2024 Daiwa Institute of Research Ltd. All Rights Reserved.{' '}
              <a href="#" className="text-[#1890ff]">Job Arranger</a>
            </p>
            <p>Version: 7.2.1</p>
          </div>
        </main>
        {expired && <InfoDialog onClose={() => setExpired(false)} />}
      </div>

      <TaskBar />
    </div>
  );
};

export default App;
